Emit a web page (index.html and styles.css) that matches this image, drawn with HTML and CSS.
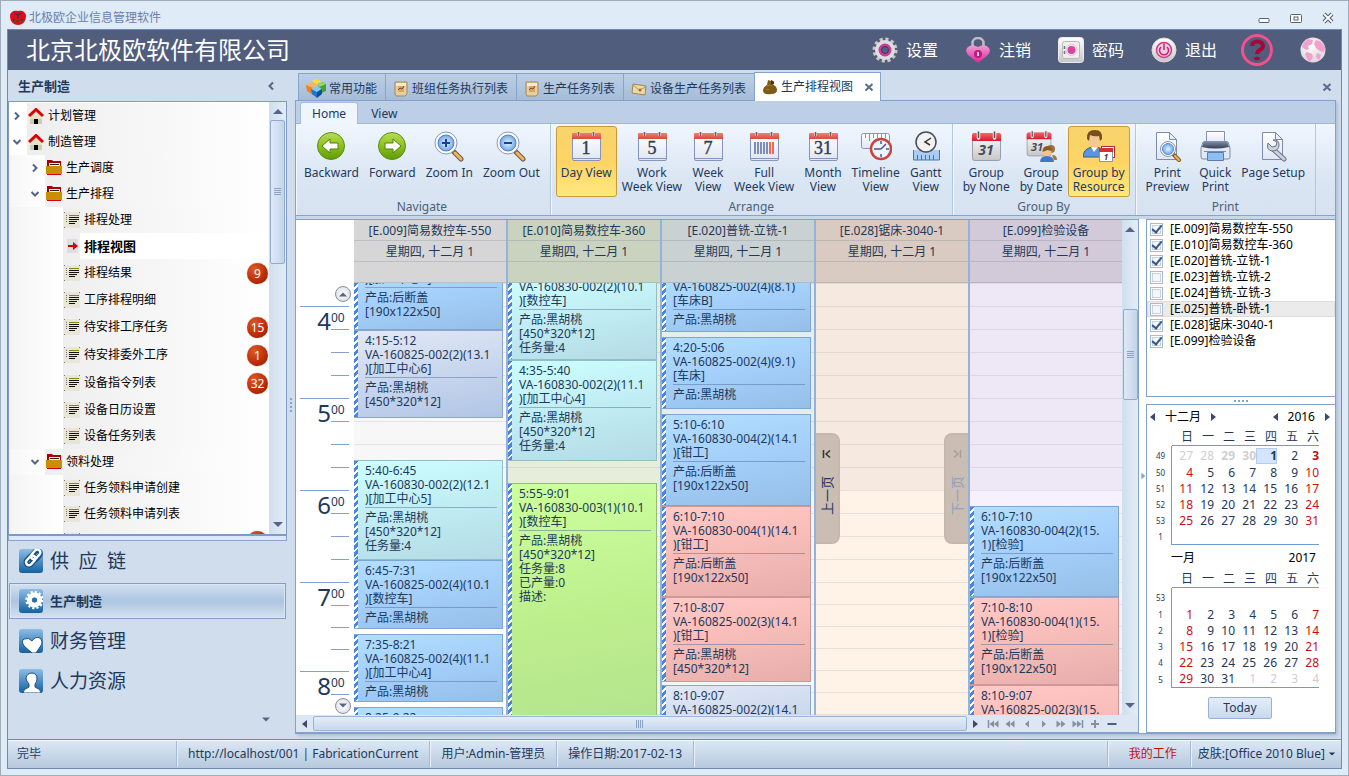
FILE: index.html
```html
<!DOCTYPE html>
<html lang="zh-CN">
<head>
<meta charset="utf-8">
<title>北极欧企业信息管理软件</title>
<link rel="stylesheet" href="styles.css">
</head>
<body>
<svg class="defs" width="0" height="0" aria-hidden="true">
  <defs>
    <linearGradient id="gGreen" x1="0" y1="0" x2="0" y2="1"><stop offset="0" stop-color="#b9dd5a"/><stop offset=".5" stop-color="#8cc21c"/><stop offset="1" stop-color="#5f9a08"/></linearGradient>
    <radialGradient id="gLens"><stop offset="0" stop-color="#e4f6ff"/><stop offset="1" stop-color="#6fa6e8"/></radialGradient>
    <linearGradient id="gPage" x1="0" y1="0" x2="0" y2="1"><stop offset="0" stop-color="#ffffff"/><stop offset="1" stop-color="#dfe6f3"/></linearGradient>
    <linearGradient id="gRed" x1="0" y1="0" x2="0" y2="1"><stop offset="0" stop-color="#f08074"/><stop offset="1" stop-color="#d84a3c"/></linearGradient>
    <linearGradient id="gHotRed" x1="0" y1="0" x2="0" y2="1"><stop offset="0" stop-color="#f8646c"/><stop offset="1" stop-color="#d41c2c"/></linearGradient>
    <linearGradient id="gBlue" x1="0" y1="0" x2="0" y2="1"><stop offset="0" stop-color="#8dbde6"/><stop offset="1" stop-color="#14619f"/></linearGradient>
    <linearGradient id="gSilver" x1="0" y1="0" x2="0" y2="1"><stop offset="0" stop-color="#ffffff"/><stop offset="1" stop-color="#c6c6c6"/></linearGradient>
    <linearGradient id="gPink" x1="0" y1="0" x2="0" y2="1"><stop offset="0" stop-color="#f59ad4"/><stop offset="1" stop-color="#d42a9a"/></linearGradient>
    <radialGradient id="gGlobe" cx=".4" cy=".35"><stop offset="0" stop-color="#fff"/><stop offset="1" stop-color="#e3dbe2"/></radialGradient>
    <linearGradient id="gDark" x1="0" y1="0" x2="0" y2="1"><stop offset="0" stop-color="#8a94ac"/><stop offset="1" stop-color="#333d57"/></linearGradient>
    <symbol id="house" viewBox="0 0 16 16"><path d="M2 7h12v9H2z" fill="#cfccb4"/><path d="M8 2l6 6v3H2V8z" fill="#e6e2c8"/><path d="M1 8L8 1.500 15 8" fill="none" stroke="#e00000" stroke-width="3"/><path d="M6 11h4v5H6z" fill="#000"/></symbol>
    <symbol id="folder" viewBox="0 0 16 16"><path d="M1 0h5l1 1h8v14H1z" fill="#a80008"/><path d="M3 3h11v4H3z" fill="#f4f0e4"/><path d="M4 4.500h9" stroke="#222"/><path d="M0 6h16v8H0z" fill="#c89000"/><path d="M1 14.500h14" stroke="#d00010"/></symbol>
    <symbol id="sheet" viewBox="0 0 16 16"><path d="M0 0h16v16H0z" fill="#e8e6d6"/><path d="M5 3.500h10" stroke="#8c8400"/><path d="M5 5.500h10M5 7.500h10M5 9.500h8M5 11.500h6" stroke="#111"/><path d="M2 3h1v1H2zM2 5h1v1H2zM2 7h1v1H2zM2 9h1v1H2zM0 0h1v1H0zM15 0h1v1h-1zM0 15h1v1H0z" fill="#777"/></symbol>
    <symbol id="sheetgo" viewBox="0 0 16 16"><rect x="3" y="1" width="11" height="14" rx="1" fill="#dedee2"/><path d="M4 7h5V4l5 4-5 4V9H4z" fill="#d00000"/></symbol>
    <symbol id="close" viewBox="0 0 10 10"><path d="M1.500 2l7 6.500M8.500 2l-7 6.500" stroke="#5c6b8c" stroke-width="2"/></symbol>
    <symbol id="scroll" viewBox="0 0 16 16"><path d="M2 1h12v12l-2 2H3l-1-2z" fill="#e4cfa0" stroke="#a88850"/><path d="M3 2h10v3H3z" fill="#f6ead0"/><rect x="5" y="5" width="6" height="6" fill="#d8a868"/><path d="M5 9l2-2 2 1 2-3" fill="none" stroke="#903c20"/></symbol>
    <symbol id="cal" viewBox="0 0 32 32"><rect x="2.500" y="3.500" width="28" height="27" rx="1.500" fill="url(#gPage)" stroke="#8794bd"/><path d="M2 9V4q0-1 1-1h27q1 0 1 1v5z" fill="url(#gRed)"/><path d="M3 28.500h27" stroke="#8794bd"/><path d="M8.500 6V2.500M23.500 6V2.500" stroke="#f0d8d8" stroke-width="3"/><path d="M8.500 6V2M23.500 6V2" stroke="#6c5564" stroke-width="1.500"/></symbol>
    <symbol id="calhot" viewBox="0 0 32 32"><rect x="2.500" y="3.500" width="28" height="27" rx="2" fill="url(#gSilver)" stroke="#9a9dac"/><path d="M2 11V5q0-2 2-2h25q2 0 2 2v6z" fill="url(#gHotRed)"/><path d="M8.500 8V1.500M24.500 8V1.500" stroke="#eee" stroke-width="3.500" stroke-linecap="round"/><path d="M8.500 8V1.500M24.500 8V1.500" stroke="#555" stroke-width="1.500"/></symbol>
    <symbol id="lens" viewBox="0 0 32 32"><path d="M20 21l8 8" stroke="#6b5a48" stroke-width="5" stroke-linecap="round"/><path d="M22 23l6 6" stroke="#f3b25c" stroke-width="3" stroke-linecap="round"/><circle cx="13" cy="13" r="11" fill="#fff" stroke="#8a97b4"/><circle cx="13" cy="13" r="8" fill="url(#gLens)" stroke="#5680cc"/></symbol>
    <symbol id="page" viewBox="0 0 32 32"><path d="M5.500 2.500h13l7 7v20h-20z" fill="url(#gPage)" stroke="#7e8aae"/><path d="M18.500 2.500v7h7z" fill="#e6ecf8" stroke="#7e8aae"/></symbol>
    <symbol id="up" viewBox="0 0 10 10"><path d="M0 8l5-5 5 5z" fill="#56648a"/></symbol>
    <symbol id="down" viewBox="0 0 10 10"><path d="M0 2l5 5 5-5z" fill="#56648a"/></symbol>
    <symbol id="left" viewBox="0 0 10 10"><path d="M7 1L2 5l5 4z" fill="#3c4a70"/></symbol>
    <symbol id="right" viewBox="0 0 10 10"><path d="M3 1l5 4-5 4z" fill="#3c4a70"/></symbol>
    <symbol id="chev" viewBox="0 0 10 10"><path d="M3 1.500L6.500 5 3 8.500" fill="none" stroke="#56648a" stroke-width="2"/></symbol>
    <symbol id="chevd" viewBox="0 0 10 10"><path d="M1.500 3L5 6.500 8.500 3" fill="none" stroke="#56648a" stroke-width="2"/></symbol>
  </defs>
</svg>

<div class="window">
  <header class="titlebar">
    <svg class="i18" viewBox="0 0 18 18"><path d="M1 7C1 3 5 1 9 2c4-1 8 1 8 5 0 6-4 9-8 9S1 13 1 7z" fill="#d8101c"/><path d="M5 4l4 2 4-2M9 6v3" stroke="#2c2468" fill="none"/><path d="M4 11h2M8 12h2M12 11h2" stroke="#165c20" stroke-width="2"/></svg>
    <span class="apptitle">北极欧企业信息管理软件</span>
    <div class="winbtns">
      <button aria-label="最小化"><svg viewBox="0 0 12 12"><rect x="1" y="6.500" width="10" height="4" rx="1" fill="#fff" stroke="#56606f"/></svg></button>
      <button aria-label="还原"><svg viewBox="0 0 12 12"><rect x=".5" y="2.500" width="11" height="8" rx="1" fill="#fff" stroke="#56606f"/><rect x="4" y="5" width="4" height="3" fill="none" stroke="#56606f"/></svg></button>
      <button aria-label="关闭"><svg viewBox="0 0 12 12"><path d="M2 2l8 8M10 2l-8 8" stroke="#56606f" stroke-width="4"/><path d="M2 2l8 8M10 2l-8 8" stroke="#fff" stroke-width="1.800"/></svg></button>
    </div>
  </header>

  <div class="frame">
    <div class="banner">
      <h1>北京北极欧软件有限公司</h1>
      <div class="menu">
        <button><svg class="i26" viewBox="0 0 26 26"><circle cx="13" cy="13" r="10.500" fill="none" stroke="#c9c9c9" stroke-width="4" stroke-dasharray="3 2.500"/><circle cx="13" cy="13" r="8" fill="none" stroke="#dedede" stroke-width="4"/><circle cx="13" cy="13" r="5" fill="#54607e" stroke="#d0389c" stroke-width="3"/><circle cx="13" cy="13" r="3.500" fill="none" stroke="#333c50"/></svg>设置</button>
        <button><svg class="i26" viewBox="0 0 26 26"><path d="M7.500 10V6a5.500 5 0 0 1 11 0v4" fill="none" stroke="#bcbcc4" stroke-width="2.500"/><path d="M13 26L3 18Q0 14 2 11q4-5 11-1 7-4 11 1 2 3-1 7z" fill="url(#gPink)"/><circle cx="13" cy="17" r="4" fill="#c4187c"/><path d="M13 15v4" stroke="#fff" stroke-width="1.500"/></svg>注销</button>
        <button><svg class="i26" viewBox="0 0 26 26"><rect x=".5" y=".5" width="25" height="25" rx="3" fill="url(#gSilver)" stroke="#ececec"/><rect x="4.500" y="4.500" width="17" height="17" rx="2" fill="#eee" stroke="#b8b8b8"/><circle cx="13.500" cy="13" r="4" fill="#d8459c"/><circle cx="13.500" cy="13" r="5.500" fill="none" stroke="#e4c4d6"/><path d="M6.500 9v3M6.500 14v3" stroke="#777" stroke-width="1.500"/></svg>密码</button>
        <button><svg class="i26" viewBox="0 0 26 26"><circle cx="13" cy="13" r="12" fill="url(#gSilver)" stroke="#dadada"/><circle cx="13" cy="13" r="7.500" fill="#ead0de" stroke="#d8358c" stroke-width="1.500"/><path d="M10 10a4.500 4.500 0 1 0 6 0M13 6.500V13" fill="none" stroke="#d01f78" stroke-width="1.500"/></svg>退出</button>
        <button aria-label="帮助"><svg class="i32" viewBox="0 0 32 32"><circle cx="16" cy="16" r="14.500" fill="none" stroke="#f4508c" stroke-width="3"/><path d="M11 12c0-6 11-6 11 0 0 4-6 3.500-6 8" fill="none" stroke="#b00038" stroke-width="4"/><ellipse cx="16" cy="24.500" rx="3" ry="1.800" fill="#b00038"/></svg></button>
        <button aria-label="语言"><svg class="i26" viewBox="0 0 26 26"><circle cx="13" cy="13" r="12.500" fill="url(#gGlobe)"/><path d="M3 6l5-4 5 1-1 4-4 2 1 3-3 1-4-3zM16 3l5 2 4 5-1 5-4-1-4-3-2-4zM7 15l5 2 1 3-3 5-3-3-2-5zM17 16l4 2-2 5-3-3z" fill="#f2a0cc"/></svg></button>
      </div>
    </div>

    <div class="work">
      <aside class="side">
        <div class="sidehead"><h2>生产制造</h2><button aria-label="折叠"><svg class="i10" viewBox="0 0 10 10"><path d="M7 1.500L3.500 5 7 8.500" fill="none" stroke="#56648a" stroke-width="2"/></svg></button></div>
        <div class="treebox">
          <ul class="tree">
            <li class="l1"><button><svg class="i10"><use href="#chev"/></svg><svg class="i16"><use href="#house"/></svg><span>计划管理</span></button></li>
            <li class="l1"><button><svg class="i10"><use href="#chevd"/></svg><svg class="i16"><use href="#house"/></svg><span>制造管理</span></button></li>
            <li class="l2"><button><svg class="i10"><use href="#chev"/></svg><svg class="i16"><use href="#folder"/></svg><span>生产调度</span></button></li>
            <li class="l2"><button><svg class="i10"><use href="#chevd"/></svg><svg class="i16"><use href="#folder"/></svg><span>生产排程</span></button></li>
            <li class="l3"><button><svg class="i16"><use href="#sheet"/></svg><span>排程处理</span></button></li>
            <li class="l3 current"><button><svg class="i16"><use href="#sheetgo"/></svg><span>排程视图</span></button></li>
            <li class="l3 tall"><button><svg class="i16"><use href="#sheet"/></svg><span>排程结果</span><b class="badge">9</b></button></li>
            <li class="l3"><button><svg class="i16"><use href="#sheet"/></svg><span>工序排程明细</span></button></li>
            <li class="l3 tall"><button><svg class="i16"><use href="#sheet"/></svg><span>待安排工序任务</span><b class="badge">15</b></button></li>
            <li class="l3 tall"><button><svg class="i16"><use href="#sheet"/></svg><span>待安排委外工序</span><b class="badge">1</b></button></li>
            <li class="l3 tall"><button><svg class="i16"><use href="#sheet"/></svg><span>设备指令列表</span><b class="badge">32</b></button></li>
            <li class="l3"><button><svg class="i16"><use href="#sheet"/></svg><span>设备日历设置</span></button></li>
            <li class="l3"><button><svg class="i16"><use href="#sheet"/></svg><span>设备任务列表</span></button></li>
            <li class="l2"><button><svg class="i10"><use href="#chevd"/></svg><svg class="i16"><use href="#folder"/></svg><span>领料处理</span></button></li>
            <li class="l3"><button><svg class="i16"><use href="#sheet"/></svg><span>任务领料申请创建</span></button></li>
            <li class="l3"><button><svg class="i16"><use href="#sheet"/></svg><span>任务领料申请列表</span></button></li>
            <li class="l3 tall"><button aria-label="更多任务"><svg class="i16"><use href="#sheet"/></svg><span></span><b class="badge"></b></button></li>
          </ul>
          <div class="vscroll"><svg class="i10"><use href="#up"/></svg><div class="thumb treethumb"><i class="grip"></i></div><div class="grow"></div><svg class="i10"><use href="#down"/></svg></div>
        </div>
        <div class="hsplit"></div>
        <nav class="modules">
          <button><svg class="i24" viewBox="0 0 24 24"><rect width="24" height="24" rx="3" fill="url(#gBlue)"/><g fill="none" stroke="#1a4f86" stroke-width="5"><rect x="14" y="1" width="6" height="11" rx="3" transform="rotate(42 17 6)"/><rect x="9" y="6" width="6" height="11" rx="3" transform="rotate(42 12 11)"/></g><g fill="none" stroke="#fff" stroke-width="2.500"><rect x="14" y="0" width="6" height="11" rx="3" transform="rotate(42 17 5)"/><rect x="9" y="6" width="6" height="11" rx="3" transform="rotate(42 12 11)"/></g></svg><span>供&ensp;应&ensp;链</span></button>
          <button class="on"><svg class="i24" viewBox="0 0 24 24"><rect width="24" height="24" rx="3" fill="url(#gBlue)"/><circle cx="15.500" cy="11" r="8" fill="none" stroke="#fff" stroke-width="2.500" stroke-dasharray="2.190 2"/><circle cx="15.500" cy="11" r="5" fill="none" stroke="#fff" stroke-width="5"/><circle cx="15.500" cy="11" r="2.500" fill="#2c6ea8"/></svg><span>生产制造</span></button>
          <button><svg class="i24" viewBox="0 0 24 24"><rect width="24" height="24" rx="3" fill="url(#gBlue)"/><path d="M13 24L5 17Q2 12 5 10q5-2 8 2 3-5 8-3 4 4 0 9l-4 6z" fill="#fff" stroke="#1a4f86"/></svg><span>财务管理</span></button>
          <button><svg class="i24" viewBox="0 0 24 24"><rect width="24" height="24" rx="3" fill="url(#gBlue)"/><path d="M4 24q0-4 6-6v-3q-3-3-3-6 1-5 6-5t5 6q0 3-2 5v3q6 2 6 6z" fill="#fff" stroke="#1a4f86"/></svg><span>人力资源</span></button>
        </nav>
        <button class="more" aria-label="更多"><svg class="i8" viewBox="0 0 10 10"><use href="#down"/></svg></button>
      </aside>
      <div class="vsplit"><i></i></div>

      <main class="content" id="work">
        <div class="tabs" role="tablist">
          <button class="first"><svg class="i20" viewBox="0 0 20 20"><path d="M0 6l6-3 6 3-5 3z" fill="#ffb060"/><path d="M0 6l7 3v7l-6-4z" fill="#f08020"/><path d="M6 2l4-2 5 2-4 3z" fill="#ffe030"/><path d="M12 5l5-2 3 2v7l-7 3z" fill="#48a030"/><path d="M12 5l5-2 3 2-7 3z" fill="#90dc60"/><path d="M5 10l6-3 5 3-5 3z" fill="#80c8ff"/><path d="M5 10l6 3v6l-5-4z" fill="#1878d0"/><path d="M16 10l-5 3v6l5-4z" fill="#0c5098"/></svg>常用功能</button>
          <button><svg class="i16"><use href="#scroll"/></svg>班组任务执行列表</button>
          <button><svg class="i16"><use href="#scroll"/></svg>生产任务列表</button>
          <button><svg class="i16" viewBox="0 0 16 16"><path d="M2 3l13 2-1 9-13-2z" fill="#ecd9a8" stroke="#a08850"/><path d="M2 4l6 5 7-3" fill="none" stroke="#b09860"/><circle cx="9" cy="9" r="1.500" fill="#b06030"/></svg>设备生产任务列表</button>
          <button class="on"><svg class="i16" viewBox="0 0 16 16"><path d="M6 1l3 1 1 3q5 2 5 6 0 4-6 4-7 1-8-3 0-4 4-6z" fill="#7e5a12"/><path d="M5 7q3-2 5 0M4 11q2-2 3 0" stroke="#a88232" fill="none"/><path d="M9 1q4 1 3 4l-3 1z" fill="#4d3608"/></svg>生产排程视图<svg class="i10 tabx"><use href="#close"/></svg></button>
          <button class="closeall" aria-label="关闭页"><svg class="i10"><use href="#close"/></svg></button>
        </div>

        <section class="panel">
          <div class="rtabs"><button class="on">Home</button><button>View</button></div>
          <div class="ribbon">
            <div class="group">
              <div class="btns">
                <button><svg class="i32" viewBox="0 0 32 32"><circle cx="16" cy="16" r="13.500" fill="url(#gGreen)" stroke="#5d8d12"/><path d="M7 16l8-7v4h8v6h-8v4z" fill="#fff" stroke="#55800f"/></svg>Backward</button>
                <button><svg class="i32" viewBox="0 0 32 32"><circle cx="16" cy="16" r="13.500" fill="url(#gGreen)" stroke="#5d8d12"/><path d="M25 16l-8-7v4H9v6h8v4z" fill="#fff" stroke="#55800f"/></svg>Forward</button>
                <button><svg class="i32" viewBox="0 0 32 32"><use href="#lens"/><path d="M13 9v8M9 13h8" stroke="#1c3f94" stroke-width="2"/></svg>Zoom In</button>
                <button><svg class="i32" viewBox="0 0 32 32"><use href="#lens"/><path d="M9 13h8" stroke="#1c3f94" stroke-width="2"/></svg>Zoom Out</button>
              </div>
              <p>Navigate</p>
            </div>
            <div class="group">
              <div class="btns">
                <button class="on"><svg class="i32" viewBox="0 0 32 32"><use href="#cal"/><text class="num" x="16" y="24">1</text></svg>Day View</button>
                <button><svg class="i32" viewBox="0 0 32 32"><use href="#cal"/><text class="num" x="16" y="24">5</text></svg><span>Work<br>Week View</span></button>
                <button><svg class="i32" viewBox="0 0 32 32"><use href="#cal"/><text class="num" x="16" y="24">7</text></svg><span>Week<br>View</span></button>
                <button><svg class="i32" viewBox="0 0 32 32"><use href="#cal"/><path d="M7 12v12M10 12v12M13 12v12M16 12v12M19 12v12" stroke="#7c8db8" stroke-width="2"/><path d="M22 12v12M25 12v12" stroke="#ee6a58" stroke-width="2"/></svg><span>Full<br>Week View</span></button>
                <button><svg class="i32" viewBox="0 0 32 32"><use href="#cal"/><text class="num" x="16" y="24">31</text></svg><span>Month<br>View</span></button>
                <button><svg class="i32" viewBox="0 0 32 32"><rect x="1.500" y="3.500" width="28" height="15" rx="2" fill="url(#gPage)" stroke="#8794bd"/><path d="M5.500 4v4M9.500 4v7M13.500 4v4M17.500 4v4M21.500 4v7M25.500 4v4" stroke="#8794bd"/><circle cx="21" cy="19" r="10" fill="#eef4ff" stroke="#c9443c" stroke-width="2.500"/><path d="M21 19l5-5M21 19h-7M21 11v3M21 24v3M26 19h3" stroke="#45568c" stroke-width="1.500"/></svg><span>Timeline<br>View</span></button>
                <button><svg class="i32" viewBox="0 0 32 32"><path d="M3.500 20v10h26V20" fill="#a9cdf5" stroke="#4076c0"/><path d="M7.500 25v5M11.500 25v5M15.500 25v5M19.500 25v5M23.500 25v5" stroke="#4076c0"/><circle cx="16" cy="12" r="10" fill="#f2f2f4" stroke="#4c4c50" stroke-width="1.500"/><path d="M21 8l-6 4 5 3" fill="none" stroke="#333" stroke-width="1.500"/></svg><span>Gantt<br>View</span></button>
              </div>
              <p>Arrange</p>
            </div>
            <div class="group">
              <div class="btns">
                <button><svg class="i32" viewBox="0 0 32 32"><use href="#calhot"/><text class="num it" x="16" y="25">31</text></svg><span>Group<br>by None</span></button>
                <button><svg class="i32" viewBox="0 0 32 32"><g transform="scale(.85)"><use href="#calhot" width="32" height="32"/></g><text class="num it sm" x="12" y="21">31</text><circle cx="26" cy="19" r="4" fill="#9c7040"/><circle cx="22" cy="22" r="4.500" fill="#f4c48c"/><path d="M17.500 22q0-6 5-6t4 5l-4-1z" fill="#8c5a20"/><path d="M15 32q0-6 7-6t7 6z" fill="#3f78c8"/><path d="M27 25q5 0 5 5h-3z" fill="#a07840"/></svg><span>Group<br>by Date</span></button>
                <button class="on"><svg class="i32" viewBox="0 0 32 32"><path d="M0 27q0-8 9-10h4q8 1 8 8l-3 2z" fill="#5c94e0" stroke="#2c5ca8"/><path d="M8 17l3 5 4-5z" fill="#fff"/><ellipse cx="11.500" cy="10" rx="6" ry="7.500" fill="#f4c893"/><path d="M4 9q-1-9 8-9 8 0 7 9l-2 2-1-5q-5 1-9-1l-1 6z" fill="#7c4e1c"/><rect x="18.500" y="16.500" width="13" height="11" fill="#fff" stroke="#b03038"/><rect x="16.500" y="18.500" width="13" height="13" fill="#fff" stroke="#8c94a8"/><path d="M16 18h14v4H16z" fill="#dc2c38"/><text class="tiny" x="23" y="30">1</text></svg><span>Group by<br>Resource</span></button>
              </div>
              <p>Group By</p>
            </div>
            <div class="group">
              <div class="btns">
                <button><svg class="i32" viewBox="0 0 32 32"><use href="#page"/><path d="M23 25l5 5" stroke="#8a5c24" stroke-width="4" stroke-linecap="round"/><path d="M24 26l4 4" stroke="#f3b25c" stroke-width="2" stroke-linecap="round"/><circle cx="17" cy="19" r="7.500" fill="#fff" stroke="#8a97b4"/><circle cx="17" cy="19" r="5.500" fill="url(#gLens)" stroke="#5790c8"/></svg><span>Print<br>Preview</span></button>
                <button><svg class="i32" viewBox="0 0 32 32"><path d="M7.500 1.500h18V13h-18z" fill="url(#gPage)" stroke="#8490b0"/><path d="M4 12h25l2 6v9q0 2-2 2H4q-2 0-2-2v-9z" fill="#e2e8f4" stroke="#7e8aae"/><path d="M5 11h23l2 6q-14 3-27 0z" fill="url(#gDark)"/><path d="M8.500 22.500h16v8h-16z" fill="#8cc0f0" stroke="#5c7cb0"/><path d="M5 21.500h22" stroke="#7e8aae"/></svg><span>Quick<br>Print</span></button>
                <button><svg class="i32" viewBox="0 0 32 32"><use href="#page"/><path d="M17 20l10 9" stroke="#6a7488" stroke-width="5" stroke-linecap="round"/><path d="M17 20l10 9" stroke="#ccd2de" stroke-width="3" stroke-linecap="round"/><path d="M11 13l4 4 4-1 1-4-4-2q6-1 6 5 0 6-7 6-6-1-4-8z" fill="#ccd2de" stroke="#6a7488"/></svg>Page Setup</button>
              </div>
              <p>Print</p>
            </div>
          </div>

          <div class="views">
            <div class="scheduler">
              <div class="schedtop">
                <div class="ruler">
                  <div class="corner"></div>
                  <div class="hours">
                    <div class="navround up"><svg class="i10"><use href="#up"/></svg></div>
                    <div class="hour"><b>4</b><i>00</i><i></i><i></i><i></i></div>
                    <div class="hour"><b>5</b><i>00</i><i></i><i></i><i></i></div>
                    <div class="hour"><b>6</b><i>00</i><i></i><i></i><i></i></div>
                    <div class="hour short"><b>7</b><i>00</i><i></i><i></i><i></i></div>
                    <div class="hour short"><b>8</b><i>00</i><i class="end"><span class="navround"><svg class="i10"><use href="#down"/></svg></span></i></div>
                  </div>
                </div>
                <div class="day grey">
                  <header><h3>[E.009]简易数控车-550</h3><p>星期四, 十二月 1</p><p></p></header>
                  <div class="slots">
                    <article class="blue" style="margin-top:-15px;height:62px"><p>)[加工中心6]</p><p>产品:后断盖<br>[190x122x50]</p></article>
                    <article class="slate" style="height:88px"><p>4:15-5:12<br>VA-160825-002(2)(13.1<br>)[加工中心6]</p><p>产品:黑胡桃<br>[450*320*12]</p></article>
                    <article class="cyan" style="margin-top:42px;height:100px"><p>5:40-6:45<br>VA-160830-002(2)(12.1<br>)[加工中心5]</p><p>产品:黑胡桃<br>[450*320*12]<br>任务量:4</p></article>
                    <article class="blue" style="height:69px"><p>6:45-7:31<br>VA-160825-002(4)(10.1<br>)[数控车]</p><p>产品:黑胡桃</p></article>
                    <article class="blue" style="margin-top:5px;height:68px"><p>7:35-8:21<br>VA-160825-002(4)(11.1<br>)[加工中心4]</p><p>产品:黑胡桃</p></article>
                    <article class="blue" style="margin-top:5px;height:68px"><p>8:25-9:22</p></article>
                  </div>
                </div>
                <div class="day green">
                  <header><h3>[E.010]简易数控车-360</h3><p>星期四, 十二月 1</p><p></p></header>
                  <div class="slots">
                    <article class="cyan" style="margin-top:-7px;height:84px"><p>VA-160830-002(2)(10.1<br>)[数控车]</p><p>产品:黑胡桃<br>[450*320*12]<br>任务量:4</p></article>
                    <article class="cyan" style="height:101px"><p>4:35-5:40<br>VA-160830-002(2)(11.1<br>)[加工中心4]</p><p>产品:黑胡桃<br>[450*320*12]<br>任务量:4</p></article>
                    <article class="lime" style="margin-top:22px;height:280px"><p>5:55-9:01<br>VA-160830-003(1)(10.1<br>)[数控车]</p><p>产品:黑胡桃<br>[450*320*12]<br>任务量:8<br>已产量:0<br>描述:</p></article>
                  </div>
                </div>
                <div class="day teal">
                  <header><h3>[E.020]普铣-立铣-1</h3><p>星期四, 十二月 1</p><p></p></header>
                  <div class="slots">
                    <article class="blue" style="margin-top:-7px;height:56px"><p>VA-160825-002(4)(8.1)<br>[车床B]</p><p>产品:黑胡桃</p></article>
                    <article class="blue" style="margin-top:5px;height:72px"><p>4:20-5:06<br>VA-160825-002(4)(9.1)<br>[车床]</p><p>产品:黑胡桃</p></article>
                    <article class="blue" style="margin-top:5px;height:92px"><p>5:10-6:10<br>VA-160830-004(2)(14.1<br>)[钳工]</p><p>产品:后断盖<br>[190x122x50]</p></article>
                    <article class="red" style="height:91px"><p>6:10-7:10<br>VA-160830-004(1)(14.1<br>)[钳工]</p><p>产品:后断盖<br>[190x122x50]</p></article>
                    <article class="red" style="height:85px"><p>7:10-8:07<br>VA-160825-002(3)(14.1<br>)[钳工]</p><p>产品:黑胡桃<br>[450*320*12]</p></article>
                    <article class="slate" style="margin-top:3px;height:85px"><p>8:10-9:07<br>VA-160825-002(2)(14.1</p></article>
                  </div>
                </div>
                <div class="day sand">
                  <header><h3>[E.028]锯床-3040-1</h3><p>星期四, 十二月 1</p><p></p></header>
                  <div class="slots">
                    <button class="jump prev"><svg class="i10" viewBox="0 0 10 10"><path d="M1.500 1v8M8 1.500L4 5l4 3.500" fill="none" stroke="#333" stroke-width="1.500"/></svg><span>上一页</span></button>
                    <button class="jump next"><svg class="i10" viewBox="0 0 10 10"><path d="M8.500 1v8M2 1.500L6 5 2 8.500" fill="none" stroke="#a79f97" stroke-width="1.500"/></svg><span>下一页</span></button>
                  </div>
                </div>
                <div class="day violet">
                  <header><h3>[E.099]检验设备</h3><p>星期四, 十二月 1</p><p></p></header>
                  <div class="slots">
                    <article class="blue" style="margin-top:223px;height:91px"><p>6:10-7:10<br>VA-160830-004(2)(15.<br>1)[检验]</p><p>产品:后断盖<br>[190x122x50]</p></article>
                    <article class="red" style="height:88px"><p>7:10-8:10<br>VA-160830-004(1)(15.<br>1)[检验]</p><p>产品:后断盖<br>[190x122x50]</p></article>
                    <article class="red" style="height:88px"><p>8:10-9:07<br>VA-160825-002(3)(15.</p></article>
                  </div>
                </div>
                <div class="vscroll"><svg class="i10"><use href="#up"/></svg><div class="grow a"></div><div class="thumb schedthumb"><i class="grip"></i></div><div class="grow b"></div><svg class="i10"><use href="#down"/></svg></div>
              </div>
              <div class="hscroll">
                <svg class="i10"><use href="#left"/></svg><div class="hthumb"><i></i></div><svg class="i10"><use href="#right"/></svg>
                <div class="pager">
                  <button aria-label="首个"><svg viewBox="0 0 12 10"><path d="M1.500 1v8" stroke="#8590a8" stroke-width="1.500"/><path d="M7 1.500L2.500 5 7 8.500zM11.500 1.500L7 5l4.500 3.500z" fill="#8590a8"/></svg></button>
                  <button aria-label="前一页"><svg viewBox="0 0 12 10"><path d="M6 1.500L1.500 5 6 8.500zM10.500 1.500L6 5l4.500 3.500z" fill="#8590a8"/></svg></button>
                  <button aria-label="前一个"><svg viewBox="0 0 12 10"><path d="M8 1.500L4 5l4 3.500z" fill="#8590a8"/></svg></button>
                  <button aria-label="后一个"><svg viewBox="0 0 12 10"><path d="M4 1.500L8 5 4 8.500z" fill="#8590a8"/></svg></button>
                  <button aria-label="后一页"><svg viewBox="0 0 12 10"><path d="M1.500 1.500L6 5 1.500 8.500zM6 1.500L10.500 5 6 8.500z" fill="#8590a8"/></svg></button>
                  <button aria-label="末个"><svg viewBox="0 0 12 10"><path d="M10.500 1v8" stroke="#8590a8" stroke-width="1.500"/><path d="M.5 1.500L5 5 .5 8.500zM5 1.500L9.500 5 5 8.500z" fill="#8590a8"/></svg></button>
                  <button aria-label="增加"><svg viewBox="0 0 12 10"><path d="M6 1v8M2 5h8" stroke="#8590a8" stroke-width="2"/></svg></button>
                  <button aria-label="减少"><svg viewBox="0 0 12 10"><path d="M1.500 5h9" stroke="#4d5c80" stroke-width="2"/></svg></button>
                </div>
              </div>
            </div>

            <div class="vsplit2"><svg class="i8" viewBox="0 0 10 10"><path d="M3 1l5 4-5 4z" fill="#8ba3c8"/></svg></div>

            <div class="rightcol">
              <div class="resources">
                <label><input type="checkbox" checked>[E.009]简易数控车-550</label>
                <label><input type="checkbox" checked>[E.010]简易数控车-360</label>
                <label><input type="checkbox" checked>[E.020]普铣-立铣-1</label>
                <label><input type="checkbox">[E.023]普铣-立铣-2</label>
                <label><input type="checkbox">[E.024]普铣-立铣-3</label>
                <label class="hover"><input type="checkbox">[E.025]普铣-卧铣-1</label>
                <label><input type="checkbox" checked>[E.028]锯床-3040-1</label>
                <label><input type="checkbox" checked>[E.099]检验设备</label>
              </div>
              <div class="hsplit2"><i></i></div>
              <div class="calendars">
                <div class="calhead">
                  <button aria-label="上个月"><svg class="i10"><use href="#left"/></svg></button><span>十二月</span><button aria-label="下个月"><svg class="i10"><use href="#right"/></svg></button>
                  <button class="yprev" aria-label="上一年"><svg class="i10"><use href="#left"/></svg></button><span class="yr">2016</span><button aria-label="下一年"><svg class="i10"><use href="#right"/></svg></button>
                </div>
                <table class="month">
                  <thead><tr><td></td><th>日</th><th>一</th><th>二</th><th>三</th><th>四</th><th>五</th><th>六</th></tr></thead>
                  <tbody>
                    <tr><th>49</th><td class="o">27</td><td class="o">28</td><td class="o b">29</td><td class="o b">30</td><td class="b"><span class="sel">1</span></td><td>2</td><td class="b">3</td></tr>
                    <tr><th>50</th><td>4</td><td>5</td><td>6</td><td>7</td><td>8</td><td>9</td><td>10</td></tr>
                    <tr><th>51</th><td>11</td><td>12</td><td>13</td><td>14</td><td>15</td><td>16</td><td>17</td></tr>
                    <tr><th>52</th><td>18</td><td>19</td><td>20</td><td>21</td><td>22</td><td>23</td><td>24</td></tr>
                    <tr><th>53</th><td>25</td><td>26</td><td>27</td><td>28</td><td>29</td><td>30</td><td>31</td></tr>
                    <tr><th>1</th><td></td><td></td><td></td><td></td><td></td><td></td><td></td></tr>
                  </tbody>
                </table>
                <div class="calhead second"><span>一月</span><span class="yr">2017</span></div>
                <table class="month">
                  <thead><tr><td></td><th>日</th><th>一</th><th>二</th><th>三</th><th>四</th><th>五</th><th>六</th></tr></thead>
                  <tbody>
                    <tr><th>53</th><td></td><td></td><td></td><td></td><td></td><td></td><td></td></tr>
                    <tr><th>1</th><td>1</td><td>2</td><td>3</td><td>4</td><td>5</td><td>6</td><td>7</td></tr>
                    <tr><th>2</th><td>8</td><td>9</td><td>10</td><td>11</td><td>12</td><td>13</td><td>14</td></tr>
                    <tr><th>3</th><td>15</td><td>16</td><td>17</td><td>18</td><td>19</td><td>20</td><td>21</td></tr>
                    <tr><th>4</th><td>22</td><td>23</td><td>24</td><td>25</td><td>26</td><td>27</td><td>28</td></tr>
                    <tr><th>5</th><td>29</td><td>30</td><td>31</td><td class="o">1</td><td class="o">2</td><td class="o">3</td><td class="o">4</td></tr>
                  </tbody>
                </table>
                <button class="today">Today</button>
              </div>
            </div>
          </div>
        </section>
      </main>
    </div>

    <footer class="status">
      <span class="done">完毕</span>
      <span>http://localhost/001 | FabricationCurrent</span>
      <span>用户:Admin-管理员</span>
      <span>操作日期:2017-02-13</span>
      <span class="fill"></span>
      <a href="#work">我的工作</a>
      <button>皮肤:[Office 2010 Blue]<svg class="i8" viewBox="0 0 10 10"><path d="M1 3l4 4 4-4z" fill="#1e395b"/></svg></button>
    </footer>
  </div>
</div>
</body>
</html>
```
FILE: styles.css
```css
* { box-sizing: border-box; }
body {
  margin: 0;
  font: 12px/14px "Noto Sans", "Noto Sans CJK SC", sans-serif;
  color: #1e395b;
}
h1, h2, h3, p, ul { margin: 0; padding: 0; font-size: inherit; font-weight: normal; }
ul { list-style: none; }
button { font: inherit; color: inherit; background: none; border: 0; padding: 0; margin: 0; cursor: pointer; }
svg { flex: none; display: block; }
.defs { position: absolute; }
.i8 { width: 8px; height: 8px; }
.i10 { width: 10px; height: 10px; }
.i16 { width: 16px; height: 16px; }
.i18 { width: 18px; height: 18px; }
.i20 { width: 20px; height: 20px; }
.i24 { width: 24px; height: 24px; }
.i26 { width: 26px; height: 26px; }
.i32 { width: 32px; height: 32px; }

.window {
  height: 100vh;
  min-height: 600px;
  display: flex;
  flex-direction: column;
  padding: 0 6px 6px;
  background: #dfebf7;
  border: 1px solid #9fadbd;
}
.titlebar { display: flex; align-items: center; height: 28px; padding: 5px 8px 0 2px; gap: 2px; flex: none; }
.apptitle { color: #6b80ad; }
.winbtns { margin-left: auto; display: flex; gap: 20px; }
.winbtns svg { width: 12px; height: 12px; }

.frame { flex: 1; min-height: 0; display: flex; flex-direction: column; border: 1px solid #6f8bb5; background: #cfdded; }
.banner { height: 40px; flex: none; display: flex; align-items: center; justify-content: space-between; background: #505d7c; color: #fff; padding: 0 15px 0 18px; }
.banner h1 { font-size: 24px; line-height: 32px; }
.menu { display: flex; align-items: center; gap: 27px; font-size: 16px; line-height: 24px; }
.menu button { display: flex; align-items: center; gap: 8px; }
.menu button:nth-child(5) { margin-left: -3px; }

.work { flex: 1; min-height: 0; display: flex; }
.side { width: 279px; flex: none; display: flex; flex-direction: column; }
.sidehead { height: 31px; flex: none; display: flex; align-items: center; justify-content: space-between; padding: 0 11px 0 10px; }
.sidehead h2 { font-size: 13px; font-weight: bold; }
.treebox { flex: 1; min-height: 0; display: flex; border: 1px solid #7f9bc4; border-bottom-width: 2px; background: #fff; overflow: hidden; }
.tree { flex: 1; padding-top: 1px; color: #000; }
.tree li { height: 26px; }
.tree li.tall { height: 28px; }
.tree button { display: flex; align-items: center; width: 100%; height: 100%; padding-right: 1px; text-align: left; }
.tree span { flex: 1; padding-left: 4px; line-height: 18px; }
.tree .i10 { margin-right: 6px; }
.l1 { padding-left: 3px; }
.l2 { padding-left: 21px; }
.l3 { padding-left: 55px; }
.tree li.l1 { background: linear-gradient(to right, #fff 18px, #eee 18px, #fff); }
.tree li.l2 { background: linear-gradient(to right, #f6f6f6, #fff 36px, #efefef 36px, #fff); }
.tree li.l3 { background: linear-gradient(to right, #f4f4f4, #fff 54px, #efefef 54px, #fff); }
.tree li.current { background: linear-gradient(to right, #f4f4f4, #fff 54px, #efefef 54px, #efefef 71px, #fff 71px); }
.current span { font-weight: bold; font-size: 13px; }
.badge { width: 21px; height: 21px; border-radius: 50%; background: radial-gradient(circle at 35% 30%, #dd5a24, #b82c08 60%, #8c1c00); box-shadow: 0 0 1px #8c5040; color: #fff; font-weight: normal; text-align: center; line-height: 21px; }

.vscroll { width: 17px; flex: none; display: flex; flex-direction: column; align-items: center; padding: 4px 0; background: linear-gradient(to right, #d0dfee, #e2ecf6); }
.thumb { width: 15px; display: flex; align-items: center; justify-content: center; border: 1px solid #8fabd0; border-radius: 2px; background: linear-gradient(to right, #dfe9f6, #c3d5ea); }
.treethumb { height: 144px; margin-top: 4px; }
.grip { width: 7px; height: 8px; background: repeating-linear-gradient(#8aa3c6 0 1px, transparent 1px 2px); }
.grow { flex: 1; }
.hsplit { height: 5px; flex: none; border: solid #8aa5cb; border-width: 0 1px 1px; background: #dce8f6; }
.modules { padding: 2px 1px 0; }
.modules button { width: 100%; height: 36px; margin-bottom: 4px; display: flex; align-items: center; gap: 7px; padding-left: 9px; border: 1px solid transparent; font-size: 19px; line-height: 24px; }
.modules button.on { border-color: #839fc7; background: linear-gradient(#d3e1f1, #adc5e0 50%, #d3e2f1); box-shadow: inset 0 0 0 1px #dbe7f4; font-size: 13px; font-weight: bold; }
.more { align-self: flex-end; margin: 13px 17px 15px 0; }
.vsplit { width: 8px; flex: none; display: flex; align-items: center; justify-content: center; }
.vsplit i { width: 2px; height: 14px; background: repeating-linear-gradient(#86a2ca 0 2px, transparent 2px 4px); }

.content { flex: 1; min-width: 0; display: flex; flex-direction: column; padding-right: 5px; padding-bottom: 5px; }
.tabs { height: 30px; flex: none; display: flex; align-items: flex-end; padding: 0 0 0 3px; }
.tabs button { height: 27px; display: flex; align-items: center; gap: 3px; padding: 3px 8px 0 7px; border: 1px solid #86a3cb; border-bottom: 0; border-right-width: 0; background: linear-gradient(#bccfe6, #a5bcd8); line-height: 18px; }
.tabs .on { height: 29px; background: #fff; border-right-width: 1px; margin-bottom: -1px; padding: 0 6px 0 7px; z-index: 1; }
.tabx { margin-left: 8px; }
.tabs .closeall { margin-left: auto; background: none; border: 0; padding: 0 4px 0 0; }
.panel { flex: 1; min-height: 0; display: flex; flex-direction: column; border: 1px solid #84a1ca; background: #c9d7e8; box-shadow: 2px 2px 3px #b0c0d6; }
.rtabs { height: 23px; flex: none; display: flex; padding: 1px 0 0 4px; background: #bdcfe7; border-bottom: 1px solid #9db8da; }
.rtabs button { padding: 4px 12px 3px; border: 1px solid transparent; border-bottom: 0; }
.rtabs button.on { padding: 4px 11px 3px; background: #f0f6fd; border-color: #a5bedf; border-radius: 3px 3px 0 0; margin-bottom: -1px; }
.ribbon { height: 92px; flex: none; display: flex; background: linear-gradient(#f0f6fe, #dae6f3 60%, #d6e2f0); border-bottom: 1px solid #86a3cb; }
.group { display: flex; flex-direction: column; justify-content: space-between; padding: 2px 5px 0; border-right: 1px solid #b3c7df; box-shadow: inset 1px 0 #f4f9fe; }
.group:first-child { padding-left: 3px; }
.group > p { text-align: center; color: #4c607a; line-height: 16px; }
.btns { display: flex; }
.btns button { height: 71px; display: flex; flex-direction: column; align-items: center; gap: 4px; padding: 3px 4px 0; border: 1px solid transparent; border-radius: 3px; line-height: 14px; text-align: center; white-space: nowrap; }
.btns button.on { border-color: #c99b38; background: linear-gradient(#f8d36c, #fdd465 50%, #ffe87c); }
.num { font: 18px "Liberation Serif", serif; text-anchor: middle; fill: #333b50; stroke: #333b50; stroke-width: .4; }
.it { font: italic bold 14px "Noto Sans", sans-serif; stroke: none; fill: #444c5c; }
.sm { font-size: 11px; }
.tiny { font: italic bold 8px "Noto Sans", sans-serif; text-anchor: middle; fill: #333; }

.views { flex: 1; min-height: 0; display: flex; padding-top: 3px; }
.scheduler { flex: 1; min-width: 0; display: flex; flex-direction: column; border: 1px solid #84a1ca; border-width: 1px 1px 1px 0; background: #fff; }
.schedtop { flex: 1; min-height: 0; display: flex; }
.schedtop > .vscroll { width: 16px; padding: 4px 0; }
.ruler { width: 58px; flex: none; display: flex; flex-direction: column; overflow: hidden; padding: 0 5px 0 4px; }
.corner { height: 63px; flex: none; }
.hours { flex: 1; min-height: 0; }
.hours > .up { margin: 3px -2px 4px auto; }
.navround { width: 16px; height: 16px; flex: none; display: flex; align-items: center; justify-content: center; border: 1px solid #8b8f98; border-radius: 50%; background: radial-gradient(#fff, #d5d8dd); }
.navround .i10 { width: 8px; height: 8px; }
.hour { display: grid; grid-template: 22px 23px 23px 23px / 1fr 18px; border-top: 1px solid #84a1ca; }
.hour.short { grid-template-rows: 22px 22px 22px 22px; }
.hour b { grid-row: span 2; font-weight: normal; font-size: 24px; line-height: 28px; text-align: right; }
.hour i { font-style: normal; line-height: 22px; border-top: 1px solid #84a1ca; }
.hour i:nth-of-type(1) { border-top: 0; }
.hour i:nth-of-type(n+2) { grid-column: 2; }
.hour i.end { display: flex; justify-content: flex-end; padding-top: 3px; }
.end .navround { margin-right: -2px; }
.day { flex: 1 1 0; min-width: 0; display: flex; flex-direction: column; border-left: 2px solid #93b3dc; }
.day.grey { border-left-width: 0; }
.day header { flex: none; text-align: center; background: var(--head); }
.day header > * { height: 21px; line-height: 22px; white-space: nowrap; border-bottom: 1px solid rgba(110, 120, 140, .25); }
.slots {
  flex: 1; min-height: 0; position: relative; overflow: hidden; display: flow-root; padding-right: 3px;
  background:
    repeating-linear-gradient(rgba(90, 80, 110, .12) 0 1px, transparent 1px 23px) 0 0 / 100% 299px no-repeat,
    repeating-linear-gradient(rgba(90, 80, 110, .12) 0 1px, transparent 1px 22px) 0 299px / 100% 700px no-repeat,
    linear-gradient(var(--off) 207px, var(--onb) 207px);
}
.grey { --head: #d6d6d6; --off: #f7f7f7; --onb: #fff; }
.green { --head: #cad3c0; --off: #e6eedb; --onb: #f0f8e6; }
.teal { --head: #c9d1d3; --off: #e4edef; --onb: #eff7f9; }
.sand { --head: #d9cbc2; --off: #f6e9df; --onb: #fff2e6; }
.violet { --head: #d2cad8; --off: #eee8f6; --onb: #f7f1ff; }
article { position: relative; overflow: hidden; padding: 3px 5px 0 11px; border: 1px solid; border-left: 0; white-space: nowrap; }
article::before { content: ""; position: absolute; inset: 0 auto 0 0; width: 4px; background: repeating-linear-gradient(135deg, #4a86e0 0 3px, #fff 3px 5px); }
article p + p { border-top: 1px solid rgba(70, 100, 150, .45); margin-top: 1px; padding-top: 3px; }
article p { line-height: 14px; }
.blue { background: linear-gradient(170deg, #b2dfff, #a4d0fb 45%, #96bfe7); border-color: #7ea6d1; }
.slate { background: linear-gradient(170deg, #e2e9f5, #b0c5e6); border-color: #8da5cf; }
.cyan { background: linear-gradient(170deg, #ccffff, #b4dae6); border-color: #91bfc9; }
.lime { background: linear-gradient(170deg, #ccff9e, #bdee8c 50%, #b0df90); border-color: #93bf72; }
.red { background: linear-gradient(170deg, #ffcac6, #f8bdb9 45%, #e6aeab); border-color: #cf9896; }
.jump { position: absolute; top: 150px; width: 24px; height: 111px; display: flex; flex-direction: column; align-items: center; padding-top: 14px; gap: 17px; border: 2px solid #c6b8ad; background: #c9bdb4; }
.jump span { writing-mode: vertical-rl; text-orientation: sideways; transform: rotate(180deg); line-height: 18px; font-size: 13px; }
.prev { left: 0; border-left: 0; border-radius: 0 8px 8px 0; }
.next { right: 0; border-right: 0; border-radius: 8px 0 0 8px; color: #8fa0bb; }
.grow.b { flex-grow: 4; }
.grow.a { flex-grow: 1; }
.schedthumb { height: 91px; }

.hscroll { height: 17px; flex: none; display: flex; align-items: center; gap: 3px; padding-left: 4px; background: #dce7f3; }
.hthumb { flex: 1; height: 15px; display: flex; align-items: center; justify-content: center; border: 1px solid #9cb5d6; border-radius: 2px; background: linear-gradient(#e4edf8, #c8d8ec); }
.hthumb i { width: 8px; height: 8px; background: repeating-linear-gradient(to right, #8aa3c6 0 1px, transparent 1px 2px); }
.pager { display: flex; gap: 5px; padding: 0 20px 0 4px; }
.pager svg { width: 12px; height: 10px; }
.vsplit2 { width: 7px; flex: none; display: flex; align-items: center; background: #fff; }
.rightcol { width: 189px; flex: none; display: flex; flex-direction: column; background: #fff; color: #000; }
.resources { flex: 1; min-height: 132px; border: 1px solid #84a1ca; border-right-width: 0; padding: 1px 0; }
.resources label { display: flex; align-items: center; gap: 7px; height: 16px; padding-left: 3px; white-space: nowrap; }
.resources .hover { background: #ebebeb; outline: 1px solid #dcdcdc; outline-offset: -1px; }
.resources input { appearance: none; width: 13px; height: 13px; margin: 0; flex: none; display: grid; place-items: center; border: 1px solid #a5bcd9; background: #f4f6f8; box-shadow: inset 0 0 0 1px #fff, inset 0 0 0 2px #c9d0da; }
.resources input:checked::before { content: ""; width: 4px; height: 8px; margin-top: -2px; border: solid #35588c; border-width: 0 2px 2px 0; transform: rotate(40deg); }
.hsplit2 { height: 7px; flex: none; display: flex; align-items: center; justify-content: center; }
.hsplit2 i { width: 14px; height: 2px; background: repeating-linear-gradient(to right, #86a2ca 0 2px, transparent 2px 4px); }
.calendars { flex: none; height: 329px; display: flex; flex-direction: column; border: 1px solid #84a1ca; border-right-width: 0; padding: 3px 3px 0 1px; }
.calhead { height: 17px; flex: none; display: flex; align-items: center; gap: 7px; }
.calhead .yr { margin-left: auto; }
.calhead .yprev { margin-left: auto; }
.calhead .yprev + .yr { margin-left: 0; }
.calhead.second { height: 18px; padding: 0 16px 0 23px; margin-top: 4px; }
.month { border-collapse: separate; border-spacing: 0; margin: 4px 0 0 8px; width: 163px; table-layout: fixed; }
.month td, .month th { padding: 0; height: 16px; line-height: 16px; text-align: right; font-weight: normal; color: #1e395b; }
.month tbody tr:first-child > * { height: 19px; }
.month tr > :first-child { width: 16px; }
.month thead > tr > * { border-bottom: 1px solid #6f9cd0; }
.month thead > tr > :first-child { border-bottom: 0; }
.month tbody th { font-size: 8px; text-align: center; padding-right: 6px; border-right: 1px solid #6f9cd0; }
.month tbody tr:last-child td { border-bottom: 1px solid #6f9cd0; }
.month tbody td:nth-child(2), .month tbody td:nth-child(8) { color: #c80f0f; }
.month tbody td.o { color: #cfcfcf; }
.month tbody td.b { font-weight: bold; }
.sel { display: block; background: #d3e4fb; outline: 1px solid #b3cdf0; outline-offset: -1px; }
.today { align-self: center; width: 64px; height: 22px; margin-top: 9px; border: 1px solid #9ab3d4; border-radius: 2px; background: linear-gradient(#e3edf8, #c8d9ed); color: #1e395b; }

.status { height: 29px; flex: none; display: flex; align-items: center; border-top: 1px solid #6f8bb5; box-shadow: inset 0 1px #eef5fc; background: linear-gradient(#dce8f5, #b7c9de); padding-left: 9px; }
.status > * { height: 26px; line-height: 26px; padding: 0 11px; border-right: 1px solid #a5b9d2; box-shadow: 1px 0 #e9f1fa; white-space: nowrap; }
.status .done { width: 160px; padding: 0; }
.status .fill { flex: 1; }
.status a { color: #c80f0f; text-decoration: none; padding: 0 13px 0 21px; }
.status button { display: flex; align-items: center; gap: 3px; padding: 0 5px 0 7px; border: 0; box-shadow: none; }
```
